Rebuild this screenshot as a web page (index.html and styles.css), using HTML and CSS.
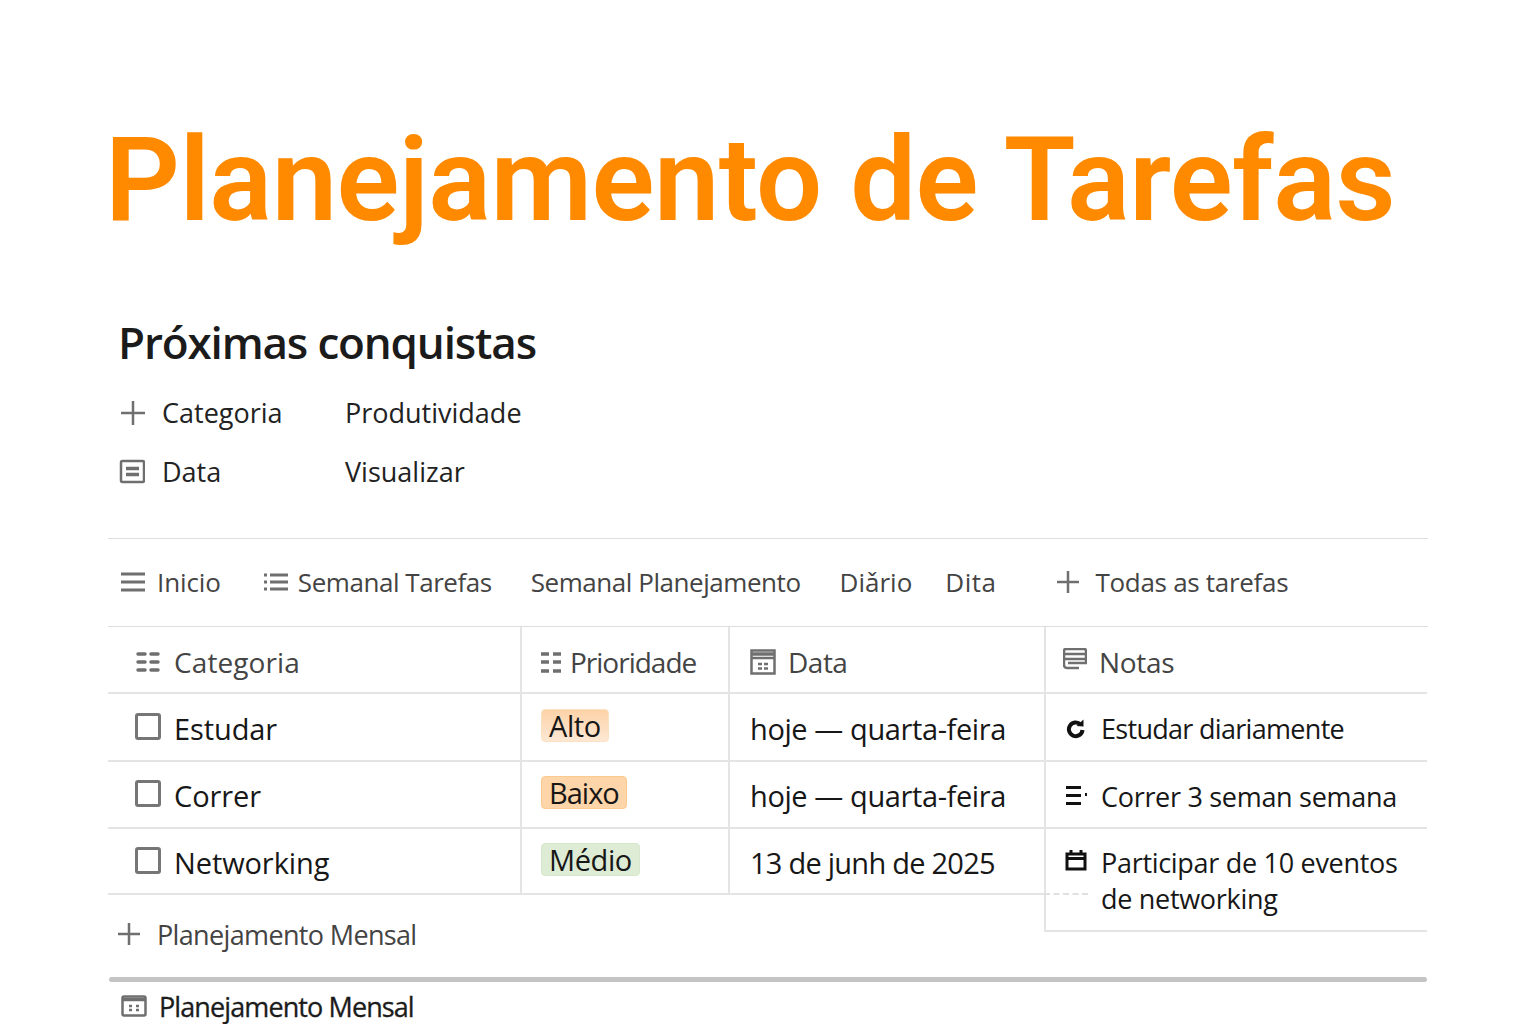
FILE: index.html
```html
<!DOCTYPE html>
<html lang="pt">
<head>
    <meta charset="UTF-8">
    <title>Planejamento de Tarefas</title>
    <link rel="stylesheet" href="styles.css">
</head>
<body>
    <h1 class="titulo">Planejamento de Tarefas</h1>

    <section class="conquistas">
        <h2>Próximas conquistas</h2>
        <div class="prop">
            <svg class="ico-prop" viewBox="0 0 26 26"><path d="M14 1v24M2 13h24" /></svg>
            <span class="prop-nome">Categoria</span>
            <span>Produtividade</span>
        </div>
        <div class="prop">
            <svg class="ico-prop" viewBox="0 0 26 26"><rect x="2" y="2" width="23" height="21" rx="1.500" /><path class="grosso" d="M7 9.500h13M7 15.500h13" /></svg>
            <span class="prop-nome">Data</span>
            <span>Visualizar</span>
        </div>
    </section>

    <nav class="abas">
        <a class="aba aba-inicio">
            <svg viewBox="0 0 26 22"><path d="M0 3h24M0 11h24M0 19h24" /></svg>
            Inicio
        </a>
        <a class="aba aba-semanal">
            <svg viewBox="0 0 24 20"><path d="M6 3h18M6 10h18M6 17h18M0 3h3M0 10h3M0 17h3" /></svg>
            Semanal Tarefas
        </a>
        <a class="aba aba-plano">Semanal Planejamento</a>
        <a class="aba aba-diario">Diǎrio</a>
        <a class="aba aba-dita">Dita</a>
        <a class="aba aba-todas">
            <svg viewBox="0 0 24 24"><path d="M12 1v22M1 12h22" /></svg>
            Todas as tarefas
        </a>
    </nav>

    <div class="tabela">
        <div class="cel cab cel-cat">
            <svg class="ico-cab" viewBox="0 0 24 22"><path class="redondo" d="M2 3h7M15 3h7M2 11h7M15 11h7M2 19h7M15 19h7" /></svg>
            Categoria
        </div>
        <div class="cel cab cel-pri">
            <svg class="ico-cab ico-pri" viewBox="0 0 20 22"><path class="grosso" d="M0 3h8M12 3h8M0 11h8M12 11h8M0 20h8M12 20h8" /></svg>
            <span class="titulo-pri">Prioridade</span>
        </div>
        <div class="cel cab cel-dat">
            <svg class="ico-cab ico-cal" viewBox="0 0 26 26"><rect x="1.500" y="1.500" width="23" height="23" /><path class="grosso" d="M1.500 5h23" /><path d="M1.500 9h23M8 15h4M14 15h4M8 19.500h4M14 19.500h4" /></svg>
            <span class="titulo-dat">Data</span>
        </div>
        <div class="cel cab cel-not">
            <svg class="ico-cab ico-not" viewBox="0 0 24 22"><path d="M1 17V3q0-2 2-2h18q2 0 2 2v12H5M1 6h22M1 11h22M1 17q0 3 3 3h12" /></svg>
            Notas
        </div>

        <div class="cel cel-cat"><span class="check"></span>Estudar</div>
        <div class="cel cel-pri"><span class="tag tag-alto">Alto</span></div>
        <div class="cel cel-dat">hoje — quarta-feira</div>
        <div class="cel cel-not">
            <svg class="ico-nota" viewBox="0 0 22 22"><path class="giro" d="M15.500 6.500A6.800 6.800 0 1 0 17.500 12" /><path class="cheio" d="M11.500 8 18.500 8.500V1.500Z" /></svg>
            <span class="nota-estreita">Estudar diariamente</span>
        </div>

        <div class="cel cel-cat"><span class="check"></span>Correr</div>
        <div class="cel cel-pri"><span class="tag tag-baixo">Baixo</span></div>
        <div class="cel cel-dat">hoje — quarta-feira</div>
        <div class="cel cel-not">
            <svg class="ico-nota" viewBox="0 0 22 22"><path class="barra" d="M1 2.500h15M1 10.500h15M1 18.500h15M20 9.500h2" /></svg>
            Correr 3 seman semana
        </div>

        <div class="cel cel-cat"><span class="check"></span>Networking</div>
        <div class="cel cel-pri"><span class="tag tag-medio">Médio</span></div>
        <div class="cel cel-dat"><span class="data-num">13 de junh de 2025</span></div>
        <div class="cel cel-not cel-fim">
            <svg class="ico-nota" viewBox="0 0 22 22"><path class="barra" d="M2 5h18v15H2ZM2 9.500h18M6 1v4M16 1v4" /></svg>
            <span>Participar de 10 eventos<br>de networking</span>
        </div>

        <div class="novo">
            <svg viewBox="0 0 24 24"><path d="M12 1v22M1 12h22" /></svg>
            Planejamento Mensal
        </div>
    </div>

    <hr class="regua">

    <div class="mensal">
        <svg viewBox="0 0 26 22"><rect x="1.500" y="1.500" width="23" height="19" rx="1.500" /><path class="grosso" d="M1.500 4.500h23" /><path d="M8 11h3M15 11h3M8 15h3M15 15h3" /></svg>
        Planejamento Mensal
    </div>
</body>
</html>
```

FILE: styles.css
```css
body {
    margin: 0;
    height: 1024px;
    overflow: hidden;
    padding: 0 108px;
    background-color: #fff;
    font-family: "Open Sans", sans-serif;
    color: #1b1b1b;
}
svg {
    flex: none;
    fill: none;
    stroke: #6f6f6f;
    stroke-width: 2.500;
}
.grosso {
    stroke-width: 3.500;
}
.redondo {
    stroke-width: 3.500;
    stroke-linecap: round;
}

.titulo {
    margin: 0 0 0 -3px;
    padding-top: 112px;
    height: 136px;
    font-family: Roboto, sans-serif;
    font-size: 117px;
    line-height: 136px;
    font-weight: 600;
    letter-spacing: -0.550px;
    color: #ff8a00;
    white-space: nowrap;
}

.conquistas {
    padding: 64px 0 0 10px;
    height: 290px;
    box-sizing: border-box;
}
.conquistas h2 {
    margin: 0 0 11px;
    font-size: 44px;
    line-height: 60px;
    font-weight: 600;
    letter-spacing: -1.150px;
}
.prop {
    display: flex;
    align-items: center;
    height: 59px;
    font-size: 27px;
    color: #222;
}
.ico-prop {
    width: 26px;
    height: 26px;
    margin: 0 17px 0 1px;
}
.prop-nome {
    width: 183px;
}

.abas {
    display: flex;
    align-items: center;
    height: 85px;
    padding-bottom: 2px;
    padding-left: 13px;
    border-top: 1px solid #dedede;
    border-bottom: 1px solid #dedede;
    font-size: 26px;
    letter-spacing: -0.450px;
    color: #444;
}
.aba {
    display: flex;
    align-items: center;
    white-space: nowrap;
}
.aba-inicio {
    letter-spacing: -0.100px;
}
.aba-inicio svg {
    width: 26px;
    height: 22px;
    margin-right: 10px;
    stroke-width: 3;
}
.aba-semanal {
    margin-left: 43px;
}
.aba-semanal svg {
    width: 24px;
    height: 20px;
    margin-right: 10px;
    stroke-width: 3;
}
.aba-plano {
    margin-left: 39px;
}
.aba-diario {
    margin-left: 39px;
    letter-spacing: 0;
}
.aba-dita {
    margin-left: 33px;
    letter-spacing: 0.500px;
}
.aba-todas {
    margin-left: 60px;
    letter-spacing: -0.300px;
}
.aba-todas svg {
    width: 24px;
    height: 24px;
    margin-right: 15px;
}

.tabela {
    display: grid;
    grid-template-columns: 414px 208px 316px 381px;
    grid-template-rows: 67px 68px 67px 66px 82px;
}
.cel {
    display: flex;
    align-items: center;
    padding-top: 2px;
    border-bottom: 2px solid #e4e4e4;
    border-right: 2px solid #e4e4e4;
    box-sizing: border-box;
    font-size: 29px;
    letter-spacing: -0.400px;
    color: #171717;
    white-space: nowrap;
}
.cab {
    padding-top: 5px;
    font-size: 28px;
    letter-spacing: 0;
    color: #444;
}
.cel-cat {
    padding-left: 27px;
    letter-spacing: -0.100px;
}
.cab.cel-cat {
    padding-left: 28px;
    letter-spacing: 0.100px;
}
.cel-pri {
    padding-left: 19px;
}
.cel-dat {
    padding-left: 20px;
}
.cel-not {
    padding-left: 19px;
    padding-top: 3px;
    border-right: none;
    font-size: 27px;
    letter-spacing: -0.300px;
}
.titulo-pri {
    letter-spacing: -1px;
}
.titulo-dat {
    letter-spacing: -0.500px;
}
.data-num {
    letter-spacing: -0.750px;
}
.nota-estreita {
    letter-spacing: -0.700px;
}
.ico-cab {
    width: 24px;
    height: 22px;
    margin-right: 14px;
}
.ico-pri {
    width: 20px;
    margin-right: 9px;
}
.ico-cal {
    width: 26px;
    height: 26px;
    margin-right: 12px;
}
.ico-not {
    margin-right: 12px;
    margin-top: -6px;
}
.cab.cel-not {
    padding-left: 17px;
    padding-top: 5px;
    letter-spacing: -0.300px;
    font-size: 28px;
}
.check {
    width: 26px;
    height: 27px;
    margin-right: 13px;
    border: 3px solid #767676;
    border-radius: 3px;
    box-sizing: border-box;
    margin-top: -4px;
}
.tag {
    height: 31px;
    padding: 0 7px;
    border: 1px solid transparent;
    border-radius: 4px;
    box-sizing: content-box;
    line-height: 31px;
    margin-top: -6px;
}
.tag-alto {
    background: linear-gradient(#fdd3a8, #fde8d4);
    border-color: #fde0c2;
}
.tag-baixo {
    background-color: #fdd5a8;
    border-color: #fcc98f;
    letter-spacing: -1px;
}
.tag-medio {
    background-color: #deecd6;
    border-color: #d6e8cc;
}

.ico-nota {
    width: 22px;
    height: 22px;
    margin-right: 14px;
}
.giro {
    stroke: #111;
    stroke-width: 4;
}
.cheio {
    fill: #111;
    stroke: none;
}
.barra {
    stroke: #111;
    stroke-width: 3;
}
.cel-fim {
    position: relative;
    grid-row: span 2;
    align-self: start;
    height: 103px;
    align-items: flex-start;
    padding-top: 16px;
    line-height: 36px;
}
.cel-fim::before {
    content: "";
    position: absolute;
    left: -2px;
    top: 64px;
    bottom: -2px;
    border-left: 2px solid #e4e4e4;
}
.cel-fim::after {
    content: "";
    position: absolute;
    left: -2px;
    top: 64px;
    width: 44px;
    border-top: 2px dashed #e0e0e0;
}
.cel-fim .ico-nota {
    margin-top: 4px;
}

.novo {
    grid-column: 1 / 4;
    display: flex;
    align-items: center;
    height: 78px;
    padding-left: 9px;
    font-size: 27px;
    letter-spacing: -0.650px;
    color: #444;
}
.novo svg {
    width: 24px;
    height: 24px;
    margin-right: 16px;
}

.regua {
    margin: 0 1px;
    height: 5px;
    border: none;
    border-radius: 3px;
    background-color: #c4c4c4;
}
.mensal {
    display: flex;
    align-items: center;
    height: 48px;
    padding-left: 13px;
    font-size: 27px;
    letter-spacing: -0.900px;
    color: #1b1b1b;
    -webkit-text-stroke: 0.300px #1b1b1b;
}
.mensal svg {
    width: 26px;
    height: 22px;
    margin-right: 12px;
}
```
